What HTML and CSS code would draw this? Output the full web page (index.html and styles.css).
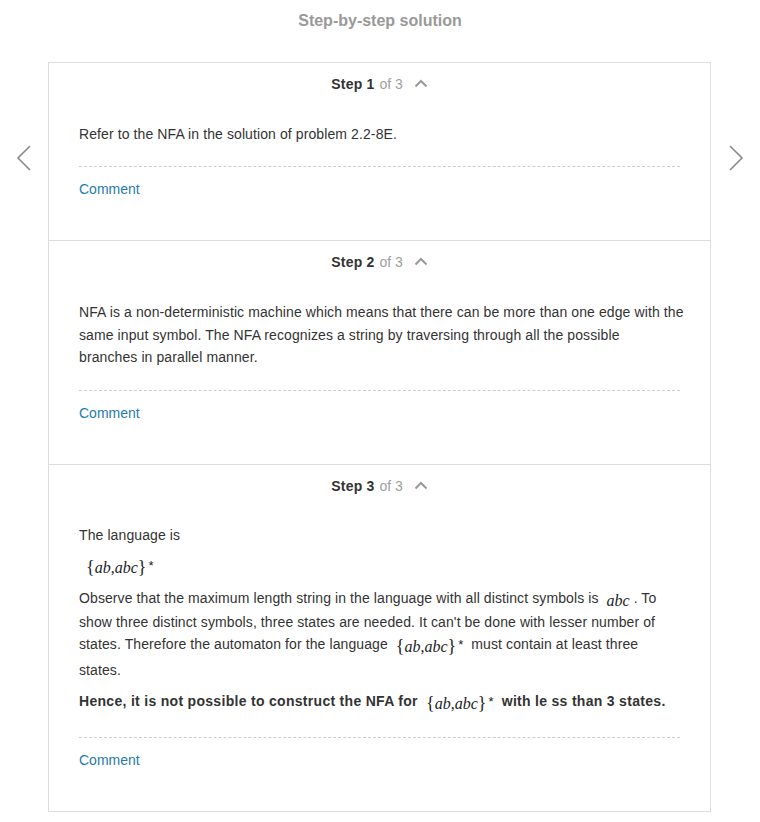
FILE: index.html
```html
<!DOCTYPE html>
<html>
<head>
<meta charset="utf-8">
<link rel="stylesheet" href="styles.css">
</head>
<body>
<div class="page">
  <h1 class="title">Step-by-step solution</h1>
  <div class="row">
    <div class="nav nav-left">
      <svg width="16" height="28" viewBox="0 0 16 28"><polyline points="14,2 2,14 14,26" fill="none" stroke="#8a8a8a" stroke-width="1.6"/></svg>
    </div>
    <div class="card">
      <section class="step">
        <div class="step-head"><b>Step 1</b> <span class="of">of 3</span>
          <svg class="caret" width="14" height="9" viewBox="0 0 14 9"><polyline points="1.5,7.5 7,2 12.5,7.5" fill="none" stroke="#999" stroke-width="2"/></svg>
        </div>
        <div class="step-body">
          <p>Refer to the NFA in the solution of problem 2.2-8E.</p>
        </div>
        <div class="comment"><a>Comment</a></div>
      </section>
      <section class="step">
        <div class="step-head"><b>Step 2</b> <span class="of">of 3</span>
          <svg class="caret" width="14" height="9" viewBox="0 0 14 9"><polyline points="1.5,7.5 7,2 12.5,7.5" fill="none" stroke="#999" stroke-width="2"/></svg>
        </div>
        <div class="step-body">
          <p class="lines">NFA is a non-deterministic machine which means that there can be more than one edge with the<br>same input symbol. The NFA recognizes a string by traversing through all the possible<br>branches in parallel manner.</p>
        </div>
        <div class="comment"><a>Comment</a></div>
      </section>
      <section class="step last">
        <div class="step-head"><b>Step 3</b> <span class="of">of 3</span>
          <svg class="caret" width="14" height="9" viewBox="0 0 14 9"><polyline points="1.5,7.5 7,2 12.5,7.5" fill="none" stroke="#999" stroke-width="2"/></svg>
        </div>
        <div class="step-body">
          <p class="lang">The language is</p>
          <p class="mathline"><span class="math"><span class="br">{</span>ab<span class="up">,</span>abc<span class="br">}</span><span class="ast">*</span></span></p>
          <p class="lines observe">Observe that the maximum length string in the language with all distinct symbols is <span class="math">abc</span>. To<br>show three distinct symbols, three states are needed. It can't be done with lesser number of<br>states. Therefore the automaton for the language <span class="math tall"><span class="br">{</span>ab<span class="up">,</span>abc<span class="br">}</span><span class="ast">*</span></span> must contain at least three<br>states.</p>
          <p class="strong">Hence, it is not possible to construct the NFA for <span class="math"><span class="br">{</span>ab<span class="up">,</span>abc<span class="br">}</span><span class="ast">*</span></span> with le ss than 3 states.</p>
        </div>
        <div class="comment"><a>Comment</a></div>
      </section>
    </div>
    <div class="nav nav-right">
      <svg width="16" height="28" viewBox="0 0 16 28"><polyline points="2,2 14,14 2,26" fill="none" stroke="#8a8a8a" stroke-width="1.6"/></svg>
    </div>
  </div>
</div>
</body>
</html>
```

FILE: styles.css
```css
html, body {
  margin: 0;
  padding: 0;
  background: #fff;
}
body {
  font-family: "Liberation Sans", Arial, sans-serif;
  color: #333;
  font-size: 14px;
}
.page {
  width: 760px;
}
.title {
  margin: 0 0 22px 0;
  height: 40px;
  line-height: 42px;
  text-align: center;
  font-size: 16px;
  font-weight: bold;
  color: #999;
}
.row {
  display: flex;
}
.nav {
  width: 48px;
  display: flex;
  justify-content: center;
  padding-top: 82px;
  align-items: flex-start;
}
.nav-right {
  width: 49px;
}
.card {
  width: 661px;
  border: 1px solid #ddd;
}
.step {
  border-bottom: 1px solid #ddd;
  padding: 0 30px 40px 30px;
}
.step.last {
  border-bottom: none;
}
.step-head {
  height: 44px;
  line-height: 42px;
  text-align: center;
  font-size: 14px;
  color: #333;
}
.step-head b {
  font-weight: bold;
  letter-spacing: 0.2px;
}
.of {
  color: #a0a0a0;
  margin-left: 1px;
}
.caret {
  margin-left: 7px;
  vertical-align: 1px;
}
.step-body {
  padding-top: 16px;
  padding-bottom: 21px;
  border-bottom: 1px dashed #ccc;
  letter-spacing: 0.1px;
}
.step.last .step-body {
  padding-top: 15px;
  padding-bottom: 23px;
}
.step-body p {
  margin: 0 0 10px 0;
  line-height: 22.4px;
}
.step-body p.lines {
  white-space: nowrap;
}
.step-body p.lang {
  margin-bottom: 8px;
}
.step-body p.mathline {
  margin-bottom: 9px;
  padding-left: 3px;
}
.step-body p.observe {
  margin-bottom: 8px;
}
.step-body p:last-child {
  margin-bottom: 0;
}
.math {
  display: inline-block;
  font-family: "Liberation Serif", "Times New Roman", serif;
  font-style: italic;
  font-size: 16px;
  color: #222;
  line-height: 20px;
  vertical-align: -3px;
  margin: 0 4px;
  letter-spacing: 0;
}
.math.tall {
  margin-bottom: 2px;
}
.math .br {
  font-style: normal;
  font-size: 18px;
  font-weight: normal;
}
.math .up {
  font-style: normal;
}
.math .ast {
  font-style: normal;
  font-size: 13px;
  margin-left: 2px;
  vertical-align: 3px;
  font-family: "Liberation Sans", Arial, sans-serif;
}
.strong {
  font-weight: bold;
  letter-spacing: 0.3px;
}
.strong .math {
  font-weight: normal;
  letter-spacing: 0;
}
.comment {
  padding-top: 11px;
  line-height: 22px;
}
.comment a {
  color: #1f7bab;
  font-size: 14px;
}
```
